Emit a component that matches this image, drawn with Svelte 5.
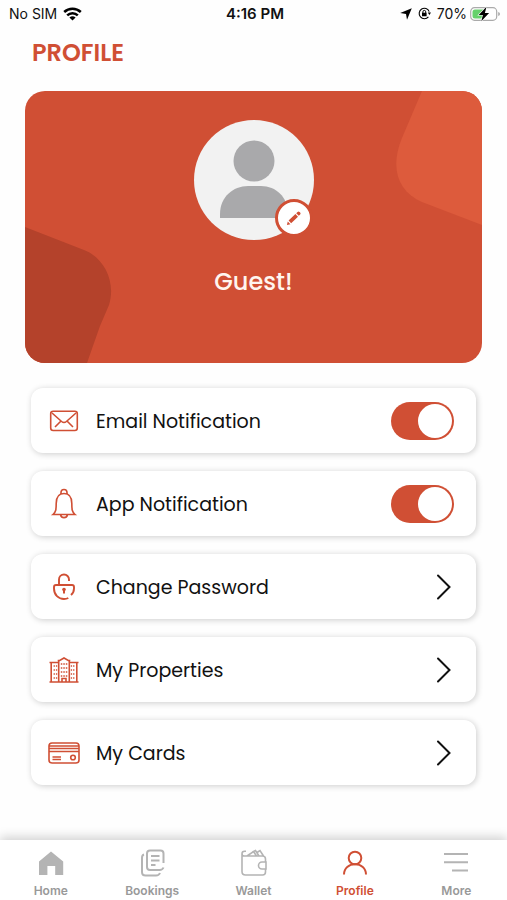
<script lang="ts">
  let emailOn = $state(true);
  let appOn = $state(true);
  let activeTab = $state("profile");

  const links = [
    { id: "password", label: "Change Password" },
    { id: "properties", label: "My Properties" },
    { id: "cards", label: "My Cards" },
  ] as const;

  const tabs = [
    { id: "home", label: "Home" },
    { id: "bookings", label: "Bookings" },
    { id: "wallet", label: "Wallet" },
    { id: "profile", label: "Profile" },
    { id: "more", label: "More" },
  ] as const;

  const windowRows = [12, 16, 20, 24];
</script>

<div class="screen">
  <div class="status">
    <div class="status-side">
      <span>No SIM</span>
      <svg class="wifi" width="19" height="14" viewBox="0 0 19 14">
        <path d="M1.2 5a12 12 0 0 1 16.6 0M4.2 8.4a7.6 7.6 0 0 1 10.6 0" fill="none" stroke="#000" stroke-width="2.5" />
        <path d="M9.5 13.6 6.4 10.6a4.5 4.5 0 0 1 6.2 0z" />
      </svg>
    </div>
    <strong class="time">4:16 PM</strong>
    <div class="status-side end">
      <svg width="12" height="12" viewBox="0 0 12 12"><path d="M11.8.2 7 11.8 6 6 .2 5z" /></svg>
      <svg width="13" height="13" viewBox="0 0 13 13">
        <path d="M10.4 9.8A5.2 5.2 0 1 1 11.2 4.6" fill="none" stroke="#000" stroke-width="1.1" />
        <path d="m9.8 5.4 3.2 0-1.6 2.6zM4 5.8h4.6v3.4H4z" />
        <path d="M4.9 6V4.800a1.4 1.4 0 0 1 2.800 0V6" fill="none" stroke="#000" />
      </svg>
      <span>70%</span>
      <svg class="battery" width="31" height="16" viewBox="0 0 31 16">
        <rect x=".7" y="1.7" width="26" height="12.600" rx="3.800" fill="#fff" stroke="#aaa" stroke-width="1.2" />
        <path d="M5 3.4h8.5v9.2H5a2.500 2.500 0 0 1-2.500-2.500V5.900A2.500 2.500 0 0 1 5 3.400z" fill="#65d16b" />
        <path d="M28.200 6v4q1.800-.7 1.800-2t-1.800-2z" fill="#aaa" />
        <path d="M16.500.8 8.700 8.900h4.200L11.300 15.200l7.800-8.100h-4.200z" stroke="#fff" stroke-width="1.200" paint-order="stroke" />
      </svg>
    </div>
  </div>

  <h1>PROFILE</h1>

  <main>
    <section class="hero">
      <svg class="shape left" width="88" height="136" viewBox="0 0 88 136">
        <path d="M0 0 59 23C80 31 91 56 84 78L75 99 62 136H0z" fill="#b4422b" />
      </svg>
      <svg class="shape right" width="87" height="135" viewBox="0 0 87 135">
        <path d="M27 0 7 47C-5 76 2 100 27 111L87 134V0z" fill="#dd5b3c" />
      </svg>
      <div class="avatar">
        <svg width="120" height="120" viewBox="0 0 120 120">
          <circle cx="60" cy="60" r="60" fill="#f2f2f2" />
          <circle cx="60" cy="41" r="20.5" fill="#a9a9ab" />
          <path d="M26 98V94C26 77 39 66 54 66h13c15 0 27 11 27 28v4z" fill="#a9a9ab" />
        </svg>
        <button class="edit" type="button" aria-label="Edit picture">
          <svg width="16" height="16" viewBox="0 0 18 18" fill="#d04f34">
            <path d="m1 17 1-4 3 3zM2.900 11.900l7.700-7.300 2.900 2.900-7.700 7.300zM11.500 3.700l1.500-1.500q1.100-1.100 2.200 0l.7.700q1.100 1.100 0 2.200l-1.500 1.500z" />
          </svg>
        </button>
      </div>
      <h2>Guest!</h2>
    </section>

    <div class="list">
      <label class="row">
        <span class="icon">
          <svg width="32" height="32" viewBox="0 0 32 32">
            <rect x="2.700" y="6.200" width="26.600" height="19.300" rx="2.500" />
            <path d="m4 8 9.600 8.500q2.400 2 4.800 0L28 8M7 22l6-6M25 22l-6-6" />
          </svg>
        </span>
        <span class="label">Email Notification</span>
        <input class="switch" type="checkbox" bind:checked={emailOn} />
      </label>
      <label class="row">
        <span class="icon">
          <svg width="32" height="32" viewBox="0 0 32 32">
            <path d="M13 5.500V4.500a3 3 0 0 1 6 0v1M5 26.500h22c-3-2.500-3.200-5-3.200-11C23.800 9 21 5.500 16 5.500s-7.800 3.500-7.800 10c0 6-.2 8.500-3.200 11zM12.600 27a3.500 3.500 0 0 0 6.800 0" />
          </svg>
        </span>
        <span class="label">App Notification</span>
        <input class="switch" type="checkbox" bind:checked={appOn} />
      </label>

      {#each links as link (link.id)}
        <button class="row" type="button">
          <span class="icon">
            {#if link.id === "password"}
              <svg width="32" height="32" viewBox="0 0 32 32">
                <path d="M11 13.500V8.500a5 5 0 0 1 10 0V10M23 24C24.900 22.300 26 20.500 26 17.500V16q0-2-2-2H8q-2 0-2 2v1.500C6 24 10.500 28 16 28q2.500 0 4.300-1" stroke-width="1.900" />
                <path d="M16 18.500V22.500" stroke-width="2" />
                <circle cx="16" cy="18.500" r="1.800" fill="#d04f34" stroke="none" />
              </svg>
            {:else if link.id === "properties"}
              <svg width="32" height="32" viewBox="0 0 32 32">
                <path d="M1.500 28h29M3.200 28V8.500M28.800 28V8.500M1.500 8.500h9M21.500 8.500h9M10.700 28V6.500M21.300 28V6.500M9.700 6.500h2L16 4l4.300 2.500h2M14 28v-3.500h4V28" />
                {#each windowRows as y (y)}
                  <path d="M5.600 {y}h1.300M7.900 {y}h1.300M22.800 {y}h1.300M25.100 {y}h1.300M12.800 {y - 2}h1.500M15.300 {y - 2}h1.500M17.800 {y - 2}h1.500" />
                {/each}
              </svg>
            {:else}
              <svg width="32" height="32" viewBox="0 0 32 32">
                <rect x="1" y="6" width="30" height="20" rx="3" />
                <path d="M1 9h30M1 11.500h30M1 14.500h30M4.500 20H13M4.500 22.500H13" stroke-width="1.300" />
                <circle cx="25" cy="20.500" r="2.300" />
              </svg>
            {/if}
          </span>
          <span class="label">{link.label}</span>
          <svg class="chevron" width="16" height="26" viewBox="0 0 16 26">
            <path d="m2 1.500 11.500 11.500L2 24.500" />
          </svg>
        </button>
      {/each}
    </div>
  </main>

  <nav>
    {#each tabs as tab (tab.id)}
      <button
        class="tab"
        class:active={activeTab === tab.id}
        type="button"
        onclick={() => (activeTab = tab.id)}
      >
        <svg width="28" height="28" viewBox="0 0 28 28">
          {#if tab.id === "home"}
            <path d="M14 2.500 26.200 12.500V26h-8V17h-7.800v9H2V12.500z" fill="currentColor" stroke="none" />
          {:else if tab.id === "bookings"}
            <path d="M25.500 14V4.500Q25.500 1.500 22.500 1.500H12q-3 0-3 3V18q0 3 3 3H21.500q3 0 4-2.500M6 5.500Q4 6 4 9v14q0 3.500 3.500 3.500h10.500q3 0 4-2.500M13 7h8.500M13 11.500h8.500M13 16h4.500" />
          {:else if tab.id === "wallet"}
            <path d="M25.500 13V10q0-3-3-3H4.500Q2 7 2 4.700T4.500 2.300H6M2 4.700V22.500q0 3.500 3.500 3.500h17q3 0 3-3V20M7 7l6.500-4.500 3 4.500M12.500 3l3-1.500 3.500 5.500M17 3.500l3-2 3.500 5.500M26 13h-4a3.500 3.500 0 0 0 0 7h4z" stroke-width="1.600" />
          {:else if tab.id === "profile"}
            <circle cx="14" cy="9" r="6.300" />
            <path d="M3 25.500C3 19 8 15.300 14 15.300S25 19 25 25.500" />
          {:else}
            <path d="M2 5h24M2 13.300h24M10 21.600h16" />
          {/if}
        </svg>
        <span>{tab.label}</span>
      </button>
    {/each}
  </nav>
</div>

<style>
  :global(body) {
    margin: 0;
    background: #fefefe;
  }

  .screen {
    display: flex;
    flex-direction: column;
    min-height: 100vh;
    color: #111;
    font-family: Poppins, Inter, sans-serif;
  }

  .status {
    display: grid;
    grid-template-columns: 1fr auto 1fr;
    align-items: center;
    height: 27px;
    padding: 0 6px 0 9px;
    font-family: Inter, sans-serif;
    font-size: 14px;
  }

  .status-side {
    display: flex;
    align-items: center;
    gap: 6px;
  }

  .end {
    justify-content: flex-end;
  }

  .time {
    font-size: 15px;
    font-weight: 600;
  }

  .battery {
    margin-left: -3px;
  }

  h1 {
    margin: 10px 32px 0;
    font-size: 24px;
    font-weight: 600;
    line-height: 32px;
    color: #d04f34;
  }

  main {
    padding: 22px 25px 50px;
  }

  .hero {
    position: relative;
    display: flex;
    flex-direction: column;
    align-items: center;
    box-sizing: border-box;
    min-height: 272px;
    padding: 29px 0 60px;
    border-radius: 20px;
    background: #d04f34;
    overflow: hidden;
  }

  .shape {
    position: absolute;
  }

  .left {
    bottom: 0;
    left: 0;
  }

  .right {
    top: 0;
    right: 0;
  }

  .avatar {
    position: relative;
    height: 120px;
  }

  .edit {
    position: absolute;
    right: 1px;
    bottom: 3px;
    display: grid;
    place-items: center;
    width: 38px;
    height: 38px;
    padding: 0;
    border: 3px solid #d04f34;
    border-radius: 50%;
    background: #fff;
  }

  h2 {
    margin: 24px 0 0;
    font-size: 24px;
    font-weight: 500;
    line-height: 36px;
    color: #fff5ef;
  }

  .list {
    display: flex;
    flex-direction: column;
    gap: 18px;
    margin: 25px 6px 0;
  }

  .row {
    display: flex;
    align-items: center;
    box-sizing: border-box;
    width: 100%;
    height: 65px;
    padding: 0 22px 0 17px;
    border: 0;
    border-radius: 12px;
    background: #fff;
    box-shadow: 1px 1px 6px rgba(0, 0, 0, 0.2);
    color: inherit;
    font-family: inherit;
    font-size: 19px;
    text-align: left;
  }

  .icon {
    display: flex;
    margin-right: 16px;
  }

  .icon svg {
    fill: none;
    stroke: #d04f34;
    stroke-width: 1.6;
  }

  .label {
    flex: 1;
    padding-top: 1px;
  }

  .chevron {
    margin-right: 2px;
    fill: none;
    stroke: #111;
    stroke-width: 2;
    stroke-linecap: round;
  }

  .switch {
    appearance: none;
    width: 63px;
    height: 38px;
    margin: 0;
    padding: 2px;
    border-radius: 19px;
    background: #ccc;
  }

  .switch::before {
    content: "";
    display: block;
    width: 34px;
    height: 34px;
    border-radius: 50%;
    background: #fff;
  }

  .switch:checked {
    background: #d04f34;
  }

  .switch:checked::before {
    margin-left: auto;
  }

  nav {
    display: flex;
    height: 60px;
    margin-top: auto;
    background: #fff;
    box-shadow: 0 -3px 10px rgba(0, 0, 0, 0.18);
  }

  .tab {
    display: flex;
    flex: 1;
    flex-direction: column;
    align-items: center;
    gap: 6px;
    padding: 9px 0 0;
    border: 0;
    background: none;
    color: #999;
    font-family: Inter, sans-serif;
    font-size: 12px;
    font-weight: 600;
    line-height: 16px;
  }

  .tab svg {
    fill: none;
    stroke: currentColor;
    stroke-width: 2;
    color: #b4b4b4;
  }

  .tab.active,
  .tab.active svg {
    color: #d04f34;
  }
</style>
